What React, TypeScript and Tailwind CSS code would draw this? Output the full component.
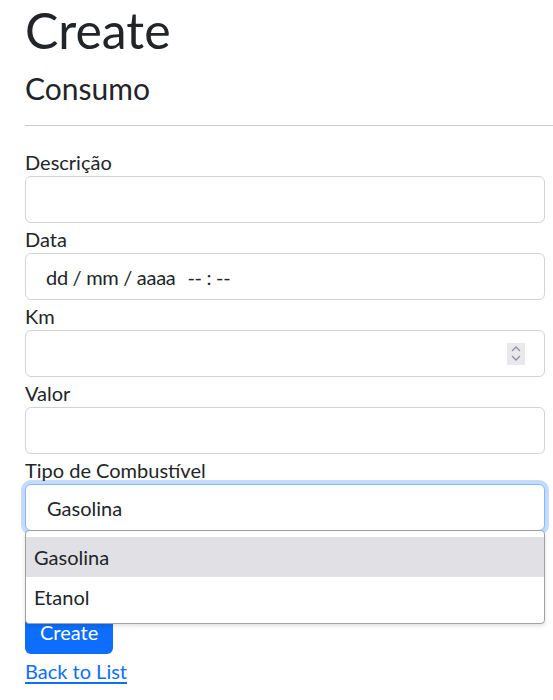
import { useState } from "react";

const fields = [
  { label: "Descrição", kind: "text" },
  { label: "Data", kind: "date" },
  { label: "Km", kind: "number" },
  { label: "Valor", kind: "text" },
];

const options = ["Gasolina", "Etanol"];

const Field = ({ label, kind }: { label: string; kind: string }) => (
  <div>
    <label className="block h-[30px] leading-[32px]">{label}</label>
    <div className="h-[47px] rounded-[6px] border border-[#ced4da] bg-white flex items-center pl-[20px] pr-[15px]">
      {kind === "date" && (
        <span className="tracking-[-0.3px]">
          dd / mm / aaaa<span className="ml-[12px]">-- : --</span>
        </span>
      )}
      {kind === "number" && (
        <div className="ml-auto mr-[4px] w-[18px] h-[22px] bg-[#e9e9ed] flex flex-col items-center justify-center gap-[3px]">
          <svg width="10" height="6" viewBox="0 0 10 6" fill="none" stroke="#8f8f9d" strokeWidth="1.3">
            <path d="M1 5 L5 1 L9 5" />
          </svg>
          <svg width="10" height="6" viewBox="0 0 10 6" fill="none" stroke="#8f8f9d" strokeWidth="1.3">
            <path d="M1 1 L5 5 L9 1" />
          </svg>
        </div>
      )}
    </div>
  </div>
);

const App = () => {
  const [value] = useState("Gasolina");

  return (
    <div className="min-h-[700px] bg-white text-[#212529] text-[20px] font-['Segoe_UI','Lato',sans-serif] pl-[25px] overflow-hidden">
      <h1 className="text-[50px] leading-[60px] mb-[10px]">Create</h1>
      <h4 className="text-[30px] leading-[36px]">Consumo</h4>
      <hr className="mt-[19px] mb-[20px] border-t border-[#c8c9ca]" />

      <div className="w-[520px] relative">
        <form>
          {fields.map((f) => (
            <Field key={f.label} label={f.label} kind={f.kind} />
          ))}

          <div>
            <label className="block h-[30px] leading-[32px]">Tipo de Combustível</label>
            <div className="h-[47px] rounded-[6px] border border-[#86b7fe] bg-white flex items-center pl-[21px] shadow-[0_0_0_4px_rgba(13,110,253,0.25)]">
              {value}
            </div>
          </div>

          <div className="mt-[76px]">
            <button type="button" className="h-[47px] px-[15px] pt-[2px] rounded-[6px] bg-[#0d6efd] text-white">
              Create
            </button>
          </div>
        </form>

        <div className="leading-[34px]">
          <a href="#" className="text-[#0d6efd] underline underline-offset-[3px]">
            Back to List
          </a>
        </div>

        <div className="absolute left-0 top-[384px] w-[520px] rounded-[4px] border border-[#a0a0a0] bg-white py-[6px] shadow-[0_2px_4px_rgba(0,0,0,0.12)]">
          {options.map((o, i) => (
            <div
              key={o}
              className={`h-[40px] flex items-center pl-[8px] ${i === 0 ? "bg-[#e1e0e5]" : ""}`}
            >
              {o}
            </div>
          ))}
        </div>
      </div>
    </div>
  );
};

export default App;
